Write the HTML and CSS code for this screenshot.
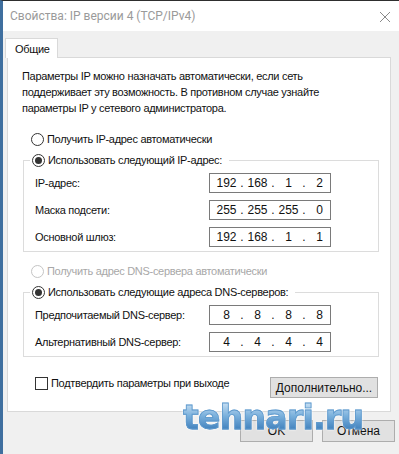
FILE: index.html
```html
<!DOCTYPE html>
<html lang="ru">
<head>
  <meta charset="UTF-8">
  <title>Свойства: IP версии 4 (TCP/IPv4)</title>
  <link rel="stylesheet" href="styles.css">
</head>
<body>

  <div class="window">
    <div class="titlebar">
      <span class="title">Свойства: IP версии 4 (TCP/IPv4)</span>
      <svg class="close" width="12" height="12" viewBox="0 0 12 12">
        <path d="M1 1 L11 11 M11 1 L1 11" stroke="#8a8a8a" stroke-width="1" fill="none"/>
      </svg>
    </div>

    <div class="content">
      <div class="tabs">
        <div class="tab">Общие</div>
      </div>

      <div class="panel">
        <p class="intro">Параметры IP можно назначать автоматически, если сеть<br>поддерживает эту возможность. В противном случае узнайте<br>параметры IP у сетевого администратора.</p>

        <div class="radio auto-ip"><span class="circle"></span>Получить IP-адрес автоматически</div>

        <div class="group ip-group">
          <div class="legend"><div class="radio"><span class="circle checked"></span>Использовать следующий IP-адрес:</div></div>
          <div class="row">
            <span class="label">IP-адрес:</span>
            <div class="ip"><span>192</span><i>.</i><span>168</span><i>.</i><span>1</span><i>.</i><span>2</span></div>
          </div>
          <div class="row">
            <span class="label">Маска подсети:</span>
            <div class="ip"><span>255</span><i>.</i><span>255</span><i>.</i><span>255</span><i>.</i><span>0</span></div>
          </div>
          <div class="row">
            <span class="label">Основной шлюз:</span>
            <div class="ip"><span>192</span><i>.</i><span>168</span><i>.</i><span>1</span><i>.</i><span>1</span></div>
          </div>
        </div>

        <div class="radio disabled auto-dns"><span class="circle"></span>Получить адрес DNS-сервера автоматически</div>

        <div class="group dns-group">
          <div class="legend"><div class="radio"><span class="circle checked"></span>Использовать следующие адреса DNS-серверов:</div></div>
          <div class="row">
            <span class="label">Предпочитаемый DNS-сервер:</span>
            <div class="ip"><span>8</span><i>.</i><span>8</span><i>.</i><span>8</span><i>.</i><span>8</span></div>
          </div>
          <div class="row">
            <span class="label">Альтернативный DNS-сервер:</span>
            <div class="ip"><span>4</span><i>.</i><span>4</span><i>.</i><span>4</span><i>.</i><span>4</span></div>
          </div>
        </div>

        <div class="bottom-row">
          <div class="check"><span class="box"></span>Подтвердить параметры при выходе</div>
          <button class="btn advanced">Дополнительно...</button>
        </div>
      </div>

      <div class="footer">
        <button class="btn">OK</button>
        <button class="btn">Отмена</button>
      </div>
    </div>

    <div class="watermark">tehnari.ru</div>
  </div>

</body>
</html>
```

FILE: styles.css
```css
body {
  margin: 0;
  font-family: "Liberation Sans", Arial, sans-serif;
  font-size: 11px;
  letter-spacing: -0.3px;
  color: #111;
  background: #f0f0f0;
}

.window {
  position: relative;
  width: 399px;
  height: 454px;
  box-sizing: border-box;
  border-top: 1px solid #2e2e2e;
  border-left: 3px solid #3f6f9f;
  background: #f0f0f0;
  overflow: hidden;
}

.titlebar {
  display: flex;
  align-items: center;
  justify-content: space-between;
  height: 30px;
  padding: 0 8px 0 7px;
  background: #fff;
}

.title {
  color: #9a9a9a;
  font-family: Roboto, "Liberation Sans", sans-serif;
  font-size: 12px;
  letter-spacing: 0;
}

.close {
  margin-top: 2px;
}

.content {
  padding: 7px 0 0 4px;
}

.tabs {
  display: flex;
  margin-left: -2px;
}

.tab {
  width: 53px;
  height: 20px;
  line-height: 20px;
  box-sizing: border-box;
  padding-left: 9px;
  background: #fff;
  border: 1px solid #d9d9d9;
  border-bottom: none;
  position: relative;
  z-index: 1;
}

.panel {
  width: 384px;
  box-sizing: border-box;
  margin-top: -1px;
  padding: 10px 11px 13px 14px;
  background: #fff;
  border: 1px solid #d9d9d9;
}

.intro {
  margin: 0;
  line-height: 16px;
}

.radio {
  display: flex;
  align-items: center;
  height: 16px;
}

.circle {
  flex: none;
  width: 11px;
  height: 11px;
  border: 1px solid #333;
  border-radius: 50%;
  margin-right: 3px;
  display: flex;
  align-items: center;
  justify-content: center;
  background: #fff;
}

.circle.checked::after {
  content: "";
  width: 7px;
  height: 7px;
  border-radius: 50%;
  background: #333;
}

.radio.disabled {
  color: #a8a8a8;
}

.radio.disabled .circle {
  border-color: #c4c4c4;
}

.auto-ip {
  margin: 15px 0 0 9px;
}

.group {
  border: 1px solid #dcdcdc;
  margin-left: 1px;
  width: 356px;
  box-sizing: border-box;
  padding: 0 0 4px 11px;
}

.legend {
  display: flex;
  margin: -9px 0 0 -5px;
}

.legend .radio {
  background: #fff;
  padding: 0 7px 0 2px;
}

.ip-group {
  margin-top: 13px;
}

.row {
  display: flex;
  align-items: center;
  height: 20px;
  margin-top: 7px;
}

.legend + .row {
  margin-top: 5px;
}

.label {
  width: 174px;
}

.ip {
  display: grid;
  grid-template-columns: 25px 6px 25px 6px 25px 6px 25px;
  width: 122px;
  height: 20px;
  box-sizing: border-box;
  padding-left: 4px;
  align-items: center;
  border: 1px solid #7a7a7a;
  font-size: 12px;
  letter-spacing: 0;
}

.ip span,
.ip i {
  text-align: center;
  font-style: normal;
}

.auto-dns {
  margin: 11px 0 0 9px;
}

.dns-group {
  margin-top: 13px;
}

.bottom-row {
  display: flex;
  align-items: center;
  margin: 20px 0 0 13px;
}

.check {
  display: flex;
  align-items: center;
  margin-top: -9px;
}

.box {
  flex: none;
  width: 11px;
  height: 11px;
  border: 1px solid #333;
  margin-right: 3px;
}

.btn {
  height: 22px;
  padding: 0;
  font-family: "Liberation Sans", Arial, sans-serif;
  font-size: 12px;
  letter-spacing: 0;
  color: #111;
  background: #e1e1e1;
  border: 1px solid #adadad;
}

.advanced {
  width: 108px;
  height: 21px;
  margin-left: auto;
  margin-right: 1px;
}

.footer {
  display: flex;
  justify-content: flex-end;
  gap: 9px;
  margin-top: 8px;
  padding-right: 4px;
}

.footer .btn {
  width: 73px;
}

.watermark {
  position: absolute;
  left: 180px;
  top: 400px;
  font-family: "DejaVu Sans", sans-serif;
  font-weight: bold;
  font-size: 33px;
  line-height: 1;
  letter-spacing: -0.7px;
  color: transparent;
  background: linear-gradient(#d2e6f6, #7ab0dc 45%, #2f72b3);
  -webkit-background-clip: text;
  background-clip: text;
  -webkit-text-stroke: 0.8px #5d98cc;
  filter: drop-shadow(0 0 1px #fff);
}
```
